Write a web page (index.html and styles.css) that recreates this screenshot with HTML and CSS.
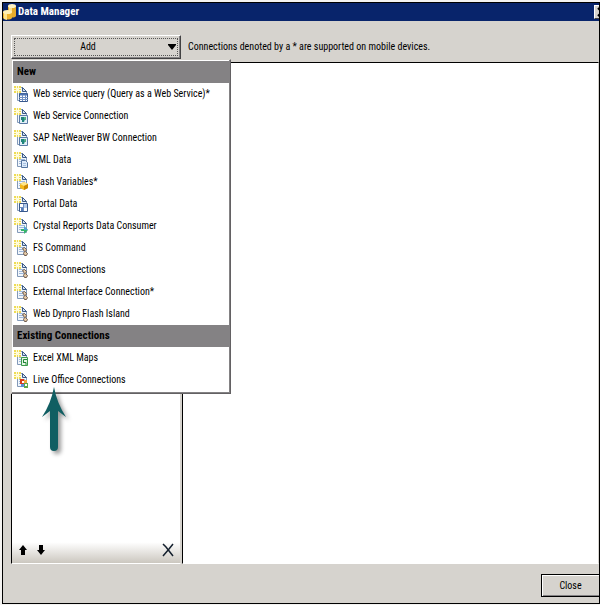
FILE: index.html
```html
<!DOCTYPE html>
<html lang="en">
<head>
    <meta charset="UTF-8">
    <meta name="viewport" content="width=device-width, initial-scale=1.0">
    <title>Data Manager</title>
    <link rel="stylesheet" href="styles.css">
</head>
<body>
    <!-- Icons shared by the menu rows -->
    <svg class="sprite" aria-hidden="true">
        <symbol id="page" viewBox="0 0 16 16">
            <path d="M3.500 1.500h5l4 4v9h-9z" fill="#f1f6fc" stroke="#8299b8"/>
            <path d="M8.500 1.500v4h4z" fill="#d5e2f2" stroke="#3c5a85"/>
            <path d="M5 7.500h6M5 9.500h6M5 11.500h6" stroke="#9fb9da"/>
            <path d="M0 0h7v7H0z" fill="#fffbd9"/>
            <path d="M0 0h2v2H0zM3 0h1v2H3zM5 0h2v2H5zM0 3h2v1H0zM5 3h2v1H5zM0 5h2v2H0zM3 5h1v2H3zM5 5h2v2H5z" fill="#eedb55"/>
        </symbol>
        <symbol id="grid" viewBox="0 0 16 16">
            <path d="M5.500 7.500h8v8h-8z" fill="#fff" stroke="#38588c"/>
            <path d="M6 8.500h7" stroke="#4c72b0" stroke-width="2"/>
            <path d="M5 11.500h9M5 13.500h9M8.500 9v6M11.500 9v6" stroke="#6f8fc2"/>
        </symbol>
        <symbol id="web" viewBox="0 0 16 16">
            <path d="M5.500 7.500h8v8h-8z" fill="#e2eff8" stroke="#5a7aa5"/>
            <path d="M7 9h3l1 2-1 3H8v-2H7z" fill="#20847c"/>
            <path d="M10 9h2v3h-1z" fill="#4fb07a"/>
        </symbol>
        <symbol id="sheet" viewBox="0 0 16 16">
            <path d="M7.500 8.500h4l2 2v5h-6z" fill="#dceafa" stroke="#54749e"/>
            <path d="M9 11.500h3M9 13.500h3" stroke="#a7c0df"/>
        </symbol>
        <symbol id="cube" viewBox="0 0 16 16">
            <path d="M6 10l4-2 4 2v4l-4 2-4-2z" fill="#f5b91c"/>
            <path d="M6 10l4-2 4 2-4 2z" fill="#ffe68a"/>
            <path d="M10 12l4-2v4l-4 2z" fill="#cb8700"/>
        </symbol>
        <symbol id="portal" viewBox="0 0 16 16">
            <path d="M5.500 7.500h8v8h-8z" fill="#fff" stroke="#38588c"/>
            <path d="M10 8h3v4h-3z" fill="#b5cbe8"/>
            <path d="M7 12h2v3H7z" fill="#557cb8"/>
            <path d="M9.500 8v7M6 11.500h3" stroke="#6f8fc2"/>
        </symbol>
        <symbol id="crystal" viewBox="0 0 16 16">
            <path d="M7 11h3V8l4 4-4 4v-3H7z" fill="#36b66a"/>
            <path d="M10 8l4 4h-4z" fill="#4d9fd6"/>
        </symbol>
        <symbol id="gear" viewBox="0 0 16 16">
            <path d="M8.500 8.500l2-1 2 2-1 2 2 2-1 2h-2l-1-2 1-2z" fill="#e3c9a5" stroke="#705c50"/>
        </symbol>
        <symbol id="excel" viewBox="0 0 16 16">
            <path d="M7.500 7.500h6v8h-6z" fill="#e5f7e4" stroke="#3c9c4b"/>
            <path d="M13 9.500H9.500V13M10 12.500h2V15" fill="none" stroke="#24833b"/>
        </symbol>
        <symbol id="office" viewBox="0 0 16 16">
            <path d="M6 7h4v5H6z" fill="#d83b1c"/>
            <path d="M10 8h3v3h-3z" fill="#f4a43a"/>
            <path d="M7 12h3v3H7z" fill="#5d8ed6"/>
            <path d="M10 11h4v5h-4z" fill="#5da84b"/>
            <path d="M8 9h2v2H8zM11 12h2v2h-2z" fill="#fff"/>
        </symbol>
    </svg>

    <div class="window">
        <header class="title-bar">
            <svg class="app-icon" viewBox="0 0 14 16" aria-hidden="true">
                <path d="M5 2v10c1 2 7 2 8 0V2z" fill="#e6ac2b"/>
                <path d="M6 2v9l3 2V2z" fill="#fbe08c"/>
                <ellipse cx="9" cy="2" rx="4" ry="2" fill="#fff3c4"/>
                <path d="M0 8v6c1 2 8 2 9 0V8z" fill="#eeb431"/>
                <path d="M1 9v6l3 1V9z" fill="#ffe48c"/>
                <ellipse cx="4.500" cy="8" rx="4.500" ry="2" fill="#fff0b5"/>
            </svg>
            <h1>Data Manager</h1>
            <button type="button" class="title-close" aria-label="Close window">
                <svg viewBox="0 0 10 10" aria-hidden="true"><path d="M1 1l8 8M9 1L1 9" stroke="#000" stroke-width="2"/></svg>
            </button>
        </header>

        <div class="toolbar">
            <div class="add">
                <button type="button" class="add-button" aria-haspopup="true" aria-expanded="true">
                    <span class="add-label">Add</span>
                    <svg class="caret" viewBox="0 0 8 6" aria-hidden="true"><path d="M0 0h8v1L4 6 0 1z"/></svg>
                </button>

                <div class="menu">
                    <h2>New</h2>
                    <button type="button"><svg viewBox="0 0 16 16"><use href="#page"/><use href="#grid"/></svg>Web service query (Query as a Web Service)*</button>
                    <button type="button"><svg viewBox="0 0 16 16"><use href="#page"/><use href="#web"/></svg>Web Service Connection</button>
                    <button type="button"><svg viewBox="0 0 16 16"><use href="#page"/><use href="#web"/></svg>SAP NetWeaver BW Connection</button>
                    <button type="button"><svg viewBox="0 0 16 16"><use href="#page"/><use href="#sheet"/></svg>XML Data</button>
                    <button type="button"><svg viewBox="0 0 16 16"><use href="#page"/><use href="#cube"/></svg>Flash Variables*</button>
                    <button type="button"><svg viewBox="0 0 16 16"><use href="#page"/><use href="#portal"/></svg>Portal Data</button>
                    <button type="button"><svg viewBox="0 0 16 16"><use href="#page"/><use href="#crystal"/></svg>Crystal Reports Data Consumer</button>
                    <button type="button"><svg viewBox="0 0 16 16"><use href="#page"/><use href="#gear"/></svg>FS Command</button>
                    <button type="button"><svg viewBox="0 0 16 16"><use href="#page"/><use href="#gear"/></svg>LCDS Connections</button>
                    <button type="button"><svg viewBox="0 0 16 16"><use href="#page"/><use href="#gear"/></svg>External Interface Connection*</button>
                    <button type="button"><svg viewBox="0 0 16 16"><use href="#page"/><use href="#gear"/></svg>Web Dynpro Flash Island</button>
                    <h2>Existing Connections</h2>
                    <button type="button"><svg viewBox="0 0 16 16"><use href="#page"/><use href="#excel"/></svg>Excel XML Maps</button>
                    <button type="button"><svg viewBox="0 0 16 16"><use href="#page"/><use href="#office"/></svg>Live Office Connections</button>

                    <!-- Pointer to the last entry -->
                    <svg class="pointer" viewBox="0 0 30 70" aria-hidden="true">
                        <path d="M15 2c2 11 6 21 12 30l-8-6v36a4 4 0 0 1-8 0V26l-8 6C9 23 13 13 15 2z" fill="#105e62"/>
                    </svg>
                </div>
            </div>
            <p>Connections denoted by a * are supported on mobile devices.</p>
        </div>

        <main class="panels">
            <section class="list-panel">
                <div class="list-tools">
                    <button type="button" aria-label="Move up"><svg viewBox="0 0 8 10"><path d="M4 0l4 5H6v5H2V5H0z"/></svg></button>
                    <button type="button" aria-label="Move down"><svg viewBox="0 0 8 10"><path d="M4 10l4-5H6V0H2v5H0z"/></svg></button>
                    <button type="button" class="remove" aria-label="Remove"><svg viewBox="0 0 12 14"><path d="M1 1l3 3 7 9M11 1L7 6l-6 7" fill="none" stroke="#14202e" stroke-width="1.500"/></svg></button>
                </div>
            </section>
            <section class="detail-panel"></section>
        </main>

        <footer>
            <button type="button" class="close-button">Close</button>
        </footer>
    </div>
</body>
</html>
```
FILE: styles.css
```css
* {
    box-sizing: border-box;
}

body {
    margin: 0;
    padding: 2px 0 1px 2px;
    background-color: #f4f3f1;
    font-family: "Roboto Condensed", Roboto, sans-serif;
    font-size: 10px;
    line-height: 14px;
    color: #000;
}

button {
    margin: 0;
    padding: 0;
    border: none;
    background: none;
    font: inherit;
    color: inherit;
}

h1, h2, p {
    margin: 0;
}

h1, h2 {
    font-size: 11px;
}

svg {
    display: block;
}

.sprite {
    display: none;
}

.window {
    display: flex;
    flex-direction: column;
    min-height: calc(100vh - 3px);
    border: 1px solid #000;
    background-color: #d6d3ce;
    overflow: hidden;
}

.title-bar {
    display: flex;
    align-items: center;
    gap: 1px;
    height: 18px;
    background-color: #08246b;
    color: #fff;
}

.app-icon {
    width: 14px;
    height: 16px;
}

.title-close {
    display: flex;
    align-items: center;
    width: 16px;
    height: 14px;
    margin: 0 -11px 0 auto;
    padding: 2px;
    border: 1px solid;
    border-color: #fff #404040 #404040 #fff;
    background-color: #d6d3ce;
}

.title-close svg {
    width: 10px;
    height: 10px;
}

.toolbar {
    display: flex;
    align-items: center;
    gap: 7px;
    padding: 14px 8px 3px;
}

.add {
    position: relative;
    width: 170px;
}

.add-button {
    display: flex;
    align-items: center;
    gap: 8px;
    width: 100%;
    height: 24px;
    padding: 0 4px;
    border: 1px solid;
    border-color: #fff #424142 #424142 #fff;
    box-shadow: inset -1px -1px #848284;
    outline: 1px dotted #555;
    outline-offset: -4px;
}

.add-label {
    flex: 1;
}

.caret {
    width: 8px;
    height: 6px;
}

.menu {
    position: absolute;
    top: 100%;
    left: 0;
    width: 220px;
    padding: 1px 1px 2px;
    border: 1px solid;
    border-color: #d6d3ce #636163 #636163 #d6d3ce;
    box-shadow: inset -1px -1px #848284;
    background-color: #fff;
}

.menu h2 {
    padding: 4px;
    background-color: #848284;
}

.menu button {
    display: flex;
    align-items: center;
    gap: 3px;
    width: 100%;
    height: 22px;
    padding-left: 1px;
    white-space: nowrap;
}

.menu button svg {
    flex: none;
    width: 16px;
    height: 16px;
}

.menu .pointer {
    position: absolute;
    bottom: -62px;
    left: 27px;
    width: 30px;
    height: 70px;
    filter: drop-shadow(3px 3px 2px rgba(0, 0, 0, 0.4));
}

.panels {
    display: flex;
    flex: 1;
    gap: 1px;
    padding-left: 8px;
}

.list-panel,
.detail-panel {
    border: 1px solid;
    border-color: #000 #d6d3ce #fff #000;
    background-color: #fff;
}

.list-panel {
    display: flex;
    flex-direction: column;
    justify-content: flex-end;
    width: 170px;
}

.detail-panel {
    flex: 1;
}

.list-tools {
    display: flex;
    align-items: center;
    gap: 10px;
    height: 26px;
    padding: 0 6px 0 7px;
    background: linear-gradient(#fff 20%, #cbc7bf);
}

.list-tools svg {
    width: 8px;
    height: 10px;
}

.list-tools .remove {
    margin-left: auto;
}

.remove svg {
    width: 12px;
    height: 14px;
}

footer {
    display: flex;
    justify-content: flex-end;
    padding: 10px 0 6px;
}

.close-button {
    width: 58px;
    height: 23px;
    border: 1px solid #000;
    border-right: none;
    box-shadow: inset 1px 1px #fff, inset 0 -1px #848284;
}
```
